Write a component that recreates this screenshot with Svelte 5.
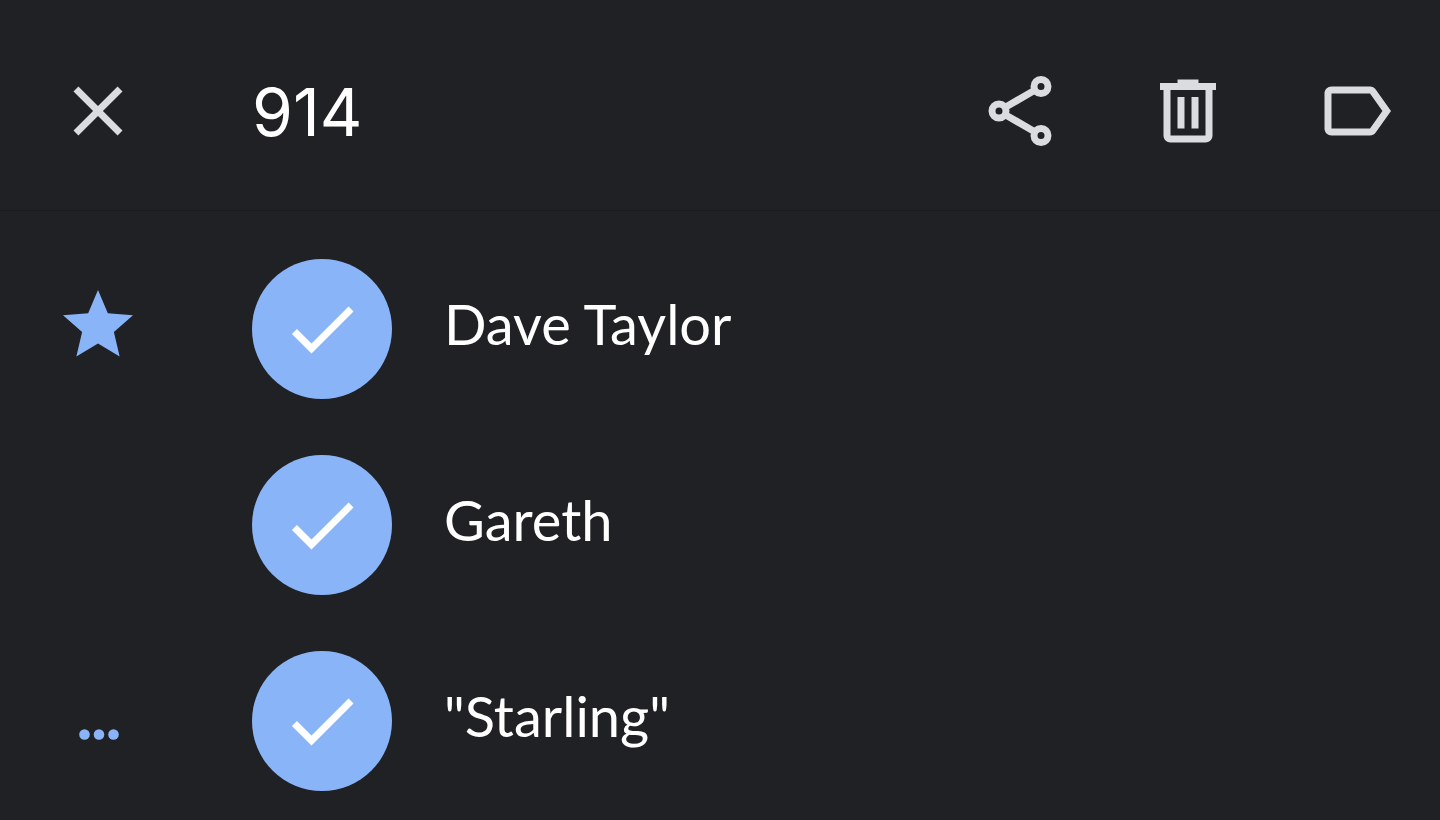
<script lang="ts">
  interface Contact {
    name: string
    marker?: 'star' | 'dots'
    selected: boolean
  }

  let contacts: Contact[] = $state([
    { name: 'Dave Taylor', marker: 'star', selected: true },
    { name: 'Gareth', selected: true },
    { name: '"Starling"', marker: 'dots', selected: true }
  ])
</script>

<header class="toolbar">
  <button type="button" aria-label="Close">
    <svg class="icon" viewBox="0 0 24 24">
      <path d="M19 6.41L17.59 5 12 10.59 6.41 5 5 6.41 10.59 12 5 17.59 6.41 19 12 13.41 17.59 19 19 17.59 13.41 12z" />
    </svg>
  </button>
  <h1 class="count">914</h1>
  <div class="actions">
    <button type="button" aria-label="Share">
      <svg class="icon line" viewBox="0 0 24 24">
        <circle cx="6" cy="12" r="2" />
        <circle cx="18" cy="5" r="2" />
        <circle cx="18" cy="19" r="2" />
        <path d="M7.8 10.95L16.2 6.05M7.8 13.05l8.4 4.9" />
      </svg>
    </button>
    <button type="button" aria-label="Delete">
      <svg class="icon" viewBox="0 0 24 24">
        <path d="M15 4V3H9v1H4v2h1v13c0 1.1.9 2 2 2h10c1.1 0 2-.9 2-2V6h1V4h-5zm2 15H7V6h10v13zM9 8h2v9H9zm4 0h2v9h-2z" />
      </svg>
    </button>
    <button type="button" aria-label="Label">
      <svg class="icon" viewBox="0 0 24 24">
        <path d="M17.63 5.84C17.27 5.33 16.67 5 16 5L5 5.01C3.9 5.01 3 5.9 3 7v10c0 1.1.9 1.99 2 1.99L16 19c.67 0 1.27-.33 1.63-.84L22 12l-4.37-6.16zM16 17H5V7h11l3.55 5L16 17z" />
      </svg>
    </button>
  </div>
</header>

<ul class="contacts">
  {#each contacts as contact}
    <li>
      <label class="row">
        <span class="marker">
          {#if contact.marker === 'star'}
            <svg class="icon" viewBox="0 0 24 24">
              <path d="M12 17.27L18.18 21l-1.64-7.03L22 9.24l-7.19-.61L12 2 9.19 8.63 2 9.24l5.46 4.73L5.82 21z" />
            </svg>
          {:else if contact.marker === 'dots'}
            <svg class="icon" viewBox="0 0 84 84">
              <circle cx="28.5" cy="59.5" r="5.3" />
              <circle cx="43" cy="59.5" r="5.3" />
              <circle cx="57.5" cy="59.5" r="5.3" />
            </svg>
          {/if}
        </span>
        <span class="avatar">
          <input type="checkbox" bind:checked={contact.selected} />
          <svg class="icon check" viewBox="0 0 24 24">
            <path d="M9 16.17L4.83 12l-1.42 1.41L9 19 21 7l-1.41-1.41z" />
          </svg>
        </span>
        <span class="name">{contact.name}</span>
      </label>
    </li>
  {/each}
</ul>

<style>
  :global(body) {
    margin: 0;
    background: #202124;
    color: #fff;
    font-family: Lato, sans-serif;
  }

  .toolbar {
    display: flex;
    align-items: center;
    padding: 69px 42px 57px 56px;
    border-bottom: 1px solid #1a1b1e;
  }

  button {
    display: block;
    padding: 0;
    border: 0;
    background: none;
    color: #dadce0;
    cursor: pointer;
  }

  .icon {
    display: block;
    width: 84px;
    height: 84px;
    fill: currentColor;
  }

  .line {
    fill: none;
    stroke: currentColor;
    stroke-width: 2;
  }

  .count {
    margin: 0 0 0 112px;
    font-family: Inter, sans-serif;
    font-size: 66px;
    font-weight: 400;
    line-height: 86px;
  }

  .actions {
    display: flex;
    gap: 84px;
    margin-left: auto;
  }

  .toolbar > * {
    max-height: 84px;
  }

  .contacts {
    margin: 0;
    padding: 20px 0 0;
    list-style: none;
  }

  .row {
    display: flex;
    align-items: center;
    padding: 28px 56px;
    cursor: pointer;
  }

  .marker {
    width: 84px;
    height: 92px;
    margin-right: 112px;
    color: #8ab4f8;
  }

  .avatar {
    display: grid;
    place-items: center;
    width: 140px;
    height: 140px;
    margin-right: 52px;
    border-radius: 50%;
    background: #8ab4f8;
  }

  .avatar input {
    grid-area: 1 / 1;
    width: 84px;
    height: 84px;
    margin: 0;
    appearance: none;
  }

  .check {
    grid-area: 1 / 1;
    visibility: hidden;
    pointer-events: none;
  }

  input:checked + .check {
    visibility: visible;
  }

  .name {
    padding-bottom: 10px;
    font-size: 56px;
    line-height: 72px;
  }
</style>
